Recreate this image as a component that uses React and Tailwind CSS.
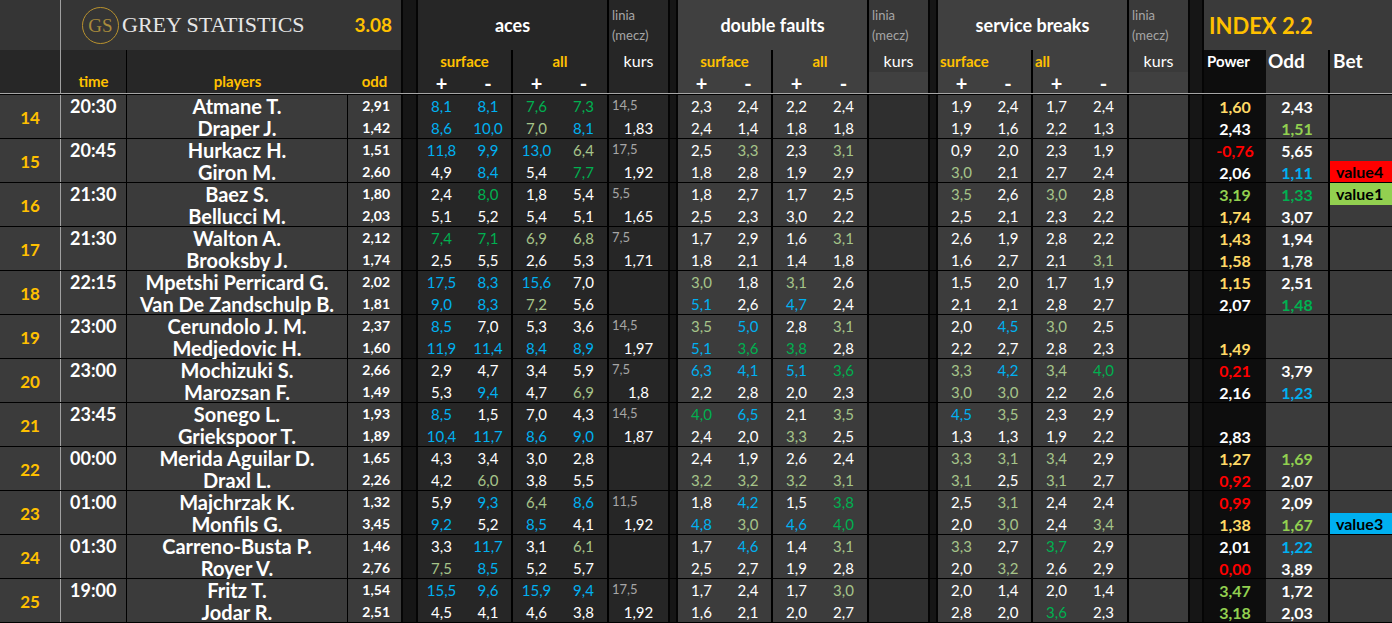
import React from 'react';

// colour codes appended to a value: B blue, G green, L pale green, P lime, Y yellow, R red
const COLORS = {
  B: 'text-[#00b0f0]',
  G: 'text-[#00b050]',
  L: 'text-[#a6c48a]',
  P: 'text-[#92d050]',
  Y: 'text-[#ffd966]',
  R: 'text-[#ff0000]',
  W: 'text-white',
};

const BET = {
  value4: 'bg-[#ff0000]',
  value1: 'bg-[#92d050]',
  value3: 'bg-[#00b0f0]',
};

function parse(v) {
  if (!v) return ['', 'W'];
  const last = v.slice(-1);
  if (/[A-Z]/.test(last)) return [v.slice(0, -1), last];
  return [v, 'W'];
}

const games = [
  { n: 14, t: '20:30', p: ['Atmane T.', 'Draper J.'], o: ['2,91', '1,42'],
    ac: [['8,1B', '8,1B', '7,6G', '7,3G'], ['8,6B', '10,0B', '7,0L', '8,1B']], k: ['14,5', '1,83'],
    df: [['2,3', '2,4', '2,2', '2,4'], ['2,4', '1,4', '1,8', '1,8']],
    sb: [['1,9', '2,4', '1,7', '2,4'], ['1,9', '1,6', '2,2', '1,3']],
    pw: ['1,60Y', '2,43'], od: ['2,43', '1,51P'], bet: [null, null] },
  { n: 15, t: '20:45', p: ['Hurkacz H.', 'Giron M.'], o: ['1,51', '2,60'],
    ac: [['11,8B', '9,9B', '13,0B', '6,4L'], ['4,9', '8,4B', '5,4', '7,7G']], k: ['17,5', '1,92'],
    df: [['2,5', '3,3L', '2,3', '3,1L'], ['1,8', '2,8', '1,9', '2,9']],
    sb: [['0,9', '2,0', '2,3', '1,9'], ['3,0L', '2,1', '2,7', '2,4']],
    pw: ['-0,76R', '2,06'], od: ['5,65', '1,11B'], bet: [null, 'value4'] },
  { n: 16, t: '21:30', p: ['Baez S.', 'Bellucci M.'], o: ['1,80', '2,03'],
    ac: [['2,4', '8,0G', '1,8', '5,4'], ['5,1', '5,2', '5,4', '5,1']], k: ['5,5', '1,65'],
    df: [['1,8', '2,7', '1,7', '2,5'], ['2,5', '2,3', '3,0', '2,2']],
    sb: [['3,5L', '2,6', '3,0L', '2,8'], ['2,5', '2,1', '2,3', '2,2']],
    pw: ['3,19P', '1,74Y'], od: ['1,33G', '3,07'], bet: ['value1', null] },
  { n: 17, t: '21:30', p: ['Walton A.', 'Brooksby J.'], o: ['2,12', '1,74'],
    ac: [['7,4G', '7,1G', '6,9L', '6,8L'], ['2,5', '5,5', '2,6', '5,3']], k: ['7,5', '1,71'],
    df: [['1,7', '2,9', '1,6', '3,1L'], ['1,8', '2,1', '1,4', '1,8']],
    sb: [['2,6', '1,9', '2,8', '2,2'], ['1,6', '2,7', '2,1', '3,1L']],
    pw: ['1,43Y', '1,58Y'], od: ['1,94', '1,78'], bet: [null, null] },
  { n: 18, t: '22:15', p: ['Mpetshi Perricard G.', 'Van De Zandschulp B.'], o: ['2,02', '1,81'],
    ac: [['17,5B', '8,3B', '15,6B', '7,0'], ['9,0B', '8,3B', '7,2L', '5,6']], k: ['', ''],
    df: [['3,0L', '1,8', '3,1L', '2,6'], ['5,1B', '2,6', '4,7B', '2,4']],
    sb: [['1,5', '2,0', '1,7', '1,9'], ['2,1', '2,1', '2,8', '2,7']],
    pw: ['1,15Y', '2,07'], od: ['2,51', '1,48G'], bet: [null, null] },
  { n: 19, t: '23:00', p: ['Cerundolo J. M.', 'Medjedovic H.'], o: ['2,37', '1,60'],
    ac: [['8,5B', '7,0', '5,3', '3,6'], ['11,9B', '11,4B', '8,4B', '8,9B']], k: ['14,5', '1,97'],
    df: [['3,5L', '5,0B', '2,8', '3,1L'], ['5,1B', '3,6G', '3,8G', '2,8']],
    sb: [['2,0', '4,5B', '3,0L', '2,5'], ['2,2', '2,7', '2,8', '2,3']],
    pw: ['', '1,49Y'], od: ['', ''], bet: [null, null] },
  { n: 20, t: '23:00', p: ['Mochizuki S.', 'Marozsan F.'], o: ['2,66', '1,49'],
    ac: [['2,9', '4,7', '3,4', '5,9'], ['5,3', '9,4B', '4,7', '6,9L']], k: ['7,5', '1,8'],
    df: [['6,3B', '4,1B', '5,1B', '3,6G'], ['2,2', '2,8', '2,0', '2,3']],
    sb: [['3,3L', '4,2B', '3,4L', '4,0G'], ['3,0L', '3,0L', '2,2', '2,6']],
    pw: ['0,21R', '2,16'], od: ['3,79', '1,23B'], bet: [null, null] },
  { n: 21, t: '23:45', p: ['Sonego L.', 'Griekspoor T.'], o: ['1,93', '1,89'],
    ac: [['8,5B', '1,5', '7,0', '4,3'], ['10,4B', '11,7B', '8,6B', '9,0B']], k: ['14,5', '1,87'],
    df: [['4,0G', '6,5B', '2,1', '3,5L'], ['2,4', '2,0', '3,3L', '2,5']],
    sb: [['4,5B', '3,5L', '2,3', '2,9'], ['1,3', '1,3', '1,9', '2,2']],
    pw: ['', '2,83'], od: ['', ''], bet: [null, null] },
  { n: 22, t: '00:00', p: ['Merida Aguilar D.', 'Draxl L.'], o: ['1,65', '2,26'],
    ac: [['4,3', '3,4', '3,0', '2,8'], ['4,2', '6,0L', '3,8', '5,5']], k: ['', ''],
    df: [['2,4', '1,9', '2,6', '2,4'], ['3,2L', '3,2L', '3,2L', '3,1L']],
    sb: [['3,3L', '3,1L', '3,4L', '2,9'], ['3,1L', '2,5', '3,1L', '2,7']],
    pw: ['1,27Y', '0,92R'], od: ['1,69P', '2,07'], bet: [null, null] },
  { n: 23, t: '01:00', p: ['Majchrzak K.', 'Monfils G.'], o: ['1,32', '3,45'],
    ac: [['5,9', '9,3B', '6,4L', '8,6B'], ['9,2B', '5,2', '8,5B', '4,1']], k: ['11,5', '1,92'],
    df: [['1,8', '4,2B', '1,5', '3,8G'], ['4,8B', '3,0L', '4,6B', '4,0G']],
    sb: [['2,5', '3,1L', '2,4', '2,4'], ['2,0', '3,0L', '2,4', '3,4L']],
    pw: ['0,99R', '1,38Y'], od: ['2,09', '1,67P'], bet: [null, 'value3'] },
  { n: 24, t: '01:30', p: ['Carreno-Busta P.', 'Royer V.'], o: ['1,46', '2,76'],
    ac: [['3,3', '11,7B', '3,1', '6,1L'], ['7,5L', '8,5B', '5,2', '5,7']], k: ['', ''],
    df: [['1,7', '4,6B', '1,4', '3,1L'], ['2,5', '2,7', '1,9', '2,8']],
    sb: [['3,3L', '2,7', '3,7G', '2,9'], ['2,0', '3,2L', '2,6', '2,9']],
    pw: ['2,01', '0,00R'], od: ['1,22B', '3,89'], bet: [null, null] },
  { n: 25, t: '19:00', p: ['Fritz T.', 'Jodar R.'], o: ['1,54', '2,51'],
    ac: [['15,5B', '9,6B', '15,9B', '9,4B'], ['4,5', '4,1', '4,6', '3,8']], k: ['17,5', '1,92'],
    df: [['1,7', '2,4', '1,7', '3,0L'], ['1,6', '2,1', '2,0', '2,7']],
    sb: [['2,0', '1,4', '2,0', '1,4'], ['2,8', '2,0', '3,6G', '2,3']],
    pw: ['3,47P', '3,18P'], od: ['1,72', '2,03'], bet: [null, null] },
];

const STAT_COLS = [
  'w-[47px]',
  'w-[48px] border-r-2 border-black',
  'w-[47px]',
  'w-[49px] border-r-2 border-black',
];

function Sep({ w }) {
  return <div className={`${w} shrink-0 bg-[#161616] border-x-2 border-[#050505]`} />;
}

function Num({ v, bold }) {
  const [text, c] = parse(v);
  return (
    <div className={`h-[21.5px] leading-[23px] text-center ${bold ? 'font-bold text-[16px]' : 'text-[15px]'} ${COLORS[c]}`}>
      {text}
    </div>
  );
}

function StatGroup({ rows, kurs, bg, kbg }) {
  return (
    <div className={`w-[250px] shrink-0 flex ${bg}`}>
      {STAT_COLS.map((c, i) => (
        <div key={i} className={`${c} flex flex-col`}>
          {rows.map((r, j) => (
            <Num key={j} v={r[i]} />
          ))}
        </div>
      ))}
      <div className={`w-[59px] flex flex-col ${kbg}`}>
        <div className="h-[21.5px] leading-[21.5px] pl-[3px] text-[13px] text-[#a6a6a6]">{kurs ? kurs[0] : ''}</div>
        <div className="h-[21.5px] leading-[23px] text-center text-[15px] text-white">{kurs ? kurs[1] : ''}</div>
      </div>
    </div>
  );
}

function StatHead({ title, bg, kbg, left }) {
  const label = `h-[22px] flex items-center text-[#ffc000] font-bold text-[15px] ${left ? 'pl-[2px]' : 'justify-center'}`;
  return (
    <div className={`w-[250px] shrink-0 flex flex-col ${bg}`}>
      <div className="h-[50px] flex">
        <div className="w-[191px] border-r-2 border-black flex items-center justify-center text-white font-bold text-[18px]">
          {title}
        </div>
        <div className={`w-[59px] ${kbg} pl-[3px] pt-[5px] text-[13px] leading-[20px] text-[#a6a6a6]`}>
          linia
          <br />
          (mecz)
        </div>
      </div>
      <div className="h-[43px] flex">
        <div className="w-[95px] border-r-2 border-black flex flex-col">
          <div className={label}>surface</div>
          <div className="h-[21px] flex text-white font-bold text-[20px] leading-[23px]">
            <div className="w-[47px] text-center">+</div>
            <div className="w-[46px] text-center">-</div>
          </div>
        </div>
        <div className="w-[96px] border-r-2 border-black flex flex-col">
          <div className={label}>all</div>
          <div className="h-[21px] flex text-white font-bold text-[20px] leading-[23px]">
            <div className="w-[47px] text-center">+</div>
            <div className="w-[47px] text-center">-</div>
          </div>
        </div>
        <div className={`w-[59px] ${kbg} h-[22px] flex items-center justify-center text-white text-[16px]`}>kurs</div>
      </div>
    </div>
  );
}

function Header() {
  return (
    <>
      <div className="flex h-[93px]">
        <div className="w-[401px] shrink-0 flex flex-col">
          <div className="h-[50px] flex bg-[#353535]">
            <div className="w-[61px] border-r border-[#a0a0a0]" />
            <div className="flex-1 flex items-center pl-[21px] pr-[9px]">
              <div className="w-[37px] h-[37px] rounded-full border-[1.5px] border-[#b8912e] flex items-center justify-center font-['Liberation_Serif',serif] text-[19px] text-[#a88a3c] leading-none">
                GS
              </div>
              <div className="ml-[3px] font-['Liberation_Serif',serif] text-[22px] text-[#e6e6e6] leading-none">
                GREY STATISTICS
              </div>
              <div className="ml-auto text-[#ffc000] font-bold text-[19px]">3.08</div>
            </div>
          </div>
          <div className="h-[43px] flex bg-[#272727] text-[#ffc000] font-bold text-[15px]">
            <div className="w-[61px] border-r border-[#a0a0a0]" />
            <div className="w-[66px] border-r border-black flex items-end justify-center pb-[1px]">time</div>
            <div className="w-[221px] flex items-end justify-center pb-[1px]">players</div>
            <div className="w-[53px] flex items-end justify-center pb-[1px]">odd</div>
          </div>
        </div>
        <Sep w="w-[17px]" />
        <StatHead title="aces" bg="bg-[#262626]" kbg="bg-[#262626]" />
        <Sep w="w-[10px]" />
        <StatHead title="double faults" bg="bg-[#404040]" kbg="bg-[#383838]" />
        <Sep w="w-[10px]" />
        <StatHead title="service breaks" bg="bg-[#404040]" kbg="bg-[#3a3a3a]" left />
        <Sep w="w-[16px]" />
        <div className="flex-1 flex flex-col bg-[#3a3a3a]">
          <div className="h-[50px] flex items-center pl-[5px] text-[#ffc000] font-bold text-[22px]">INDEX 2.2</div>
          <div className="h-[43px] flex text-white font-bold">
            <div className="w-[62px] bg-[#0d0d0d] pl-[3px] h-full text-[15px] leading-[22px]">Power</div>
            <div className="w-[64px] border-r-2 border-black pl-[2px] text-[19px] leading-[22px]">Odd</div>
            <div className="flex-1 pl-[3px] text-[19px] leading-[22px]">Bet</div>
          </div>
        </div>
      </div>
      <div className="h-px bg-[#a6a6a6]" />
      <div className="h-px bg-black" />
    </>
  );
}

function Game({ g }) {
  return (
    <div className="flex h-[44px] border-b border-black">
      <div className="w-[61px] shrink-0 bg-[#3b3b3b] border-r border-[#a0a0a0] flex items-center justify-center pt-[2px] text-[#ffc000] font-bold text-[17px]">
        {g.n}
      </div>
      <div className="w-[66px] shrink-0 bg-[#3b3b3b] border-r border-black pl-[9px] text-white font-bold text-[18px] leading-[22.5px]">
        {g.t}
      </div>
      <div className="w-[221px] shrink-0 bg-[#3b3b3b] border-r border-black flex flex-col text-white font-bold text-[20px] text-center whitespace-nowrap">
        {g.p.map((name) => (
          <div key={name} className="h-[21.5px] leading-[22.5px]">{name}</div>
        ))}
      </div>
      <div className="w-[53px] shrink-0 bg-[#3b3b3b] flex flex-col text-white font-bold text-[14px] text-right pr-[11px]">
        {g.o.map((v, i) => (
          <div key={i} className="h-[21.5px] leading-[22px]">{v}</div>
        ))}
      </div>
      <Sep w="w-[17px]" />
      <StatGroup rows={g.ac} kurs={g.k} bg="bg-[#262626]" kbg="bg-[#262626]" />
      <Sep w="w-[10px]" />
      <StatGroup rows={g.df} bg="bg-[#3c3c3c]" kbg="bg-[#2f2f2f]" />
      <Sep w="w-[10px]" />
      <StatGroup rows={g.sb} bg="bg-[#3c3c3c]" kbg="bg-[#3c3c3c]" />
      <Sep w="w-[16px]" />
      <div className="w-[62px] shrink-0 bg-[#0d0d0d] flex flex-col">
        {g.pw.map((v, i) => (
          <Num key={i} v={v} bold />
        ))}
      </div>
      <div className="w-[64px] shrink-0 bg-[#3b3b3b] border-r-2 border-black flex flex-col">
        {g.od.map((v, i) => (
          <Num key={i} v={v} bold />
        ))}
      </div>
      <div className="flex-1 bg-[#3b3b3b] flex flex-col">
        {g.bet.map((b, i) => (
          <div
            key={i}
            className={`h-[21.5px] leading-[21.5px] pl-[6px] text-black font-bold text-[16px] ${b ? BET[b] : ''}`}
          >
            {b || ''}
          </div>
        ))}
      </div>
    </div>
  );
}

export default function App() {
  return (
    <div className="w-[1392px] h-[623px] overflow-hidden bg-[#262626] font-['Lato',sans-serif]">
      <Header />
      {games.map((g) => (
        <Game key={g.n} g={g} />
      ))}
    </div>
  );
}
